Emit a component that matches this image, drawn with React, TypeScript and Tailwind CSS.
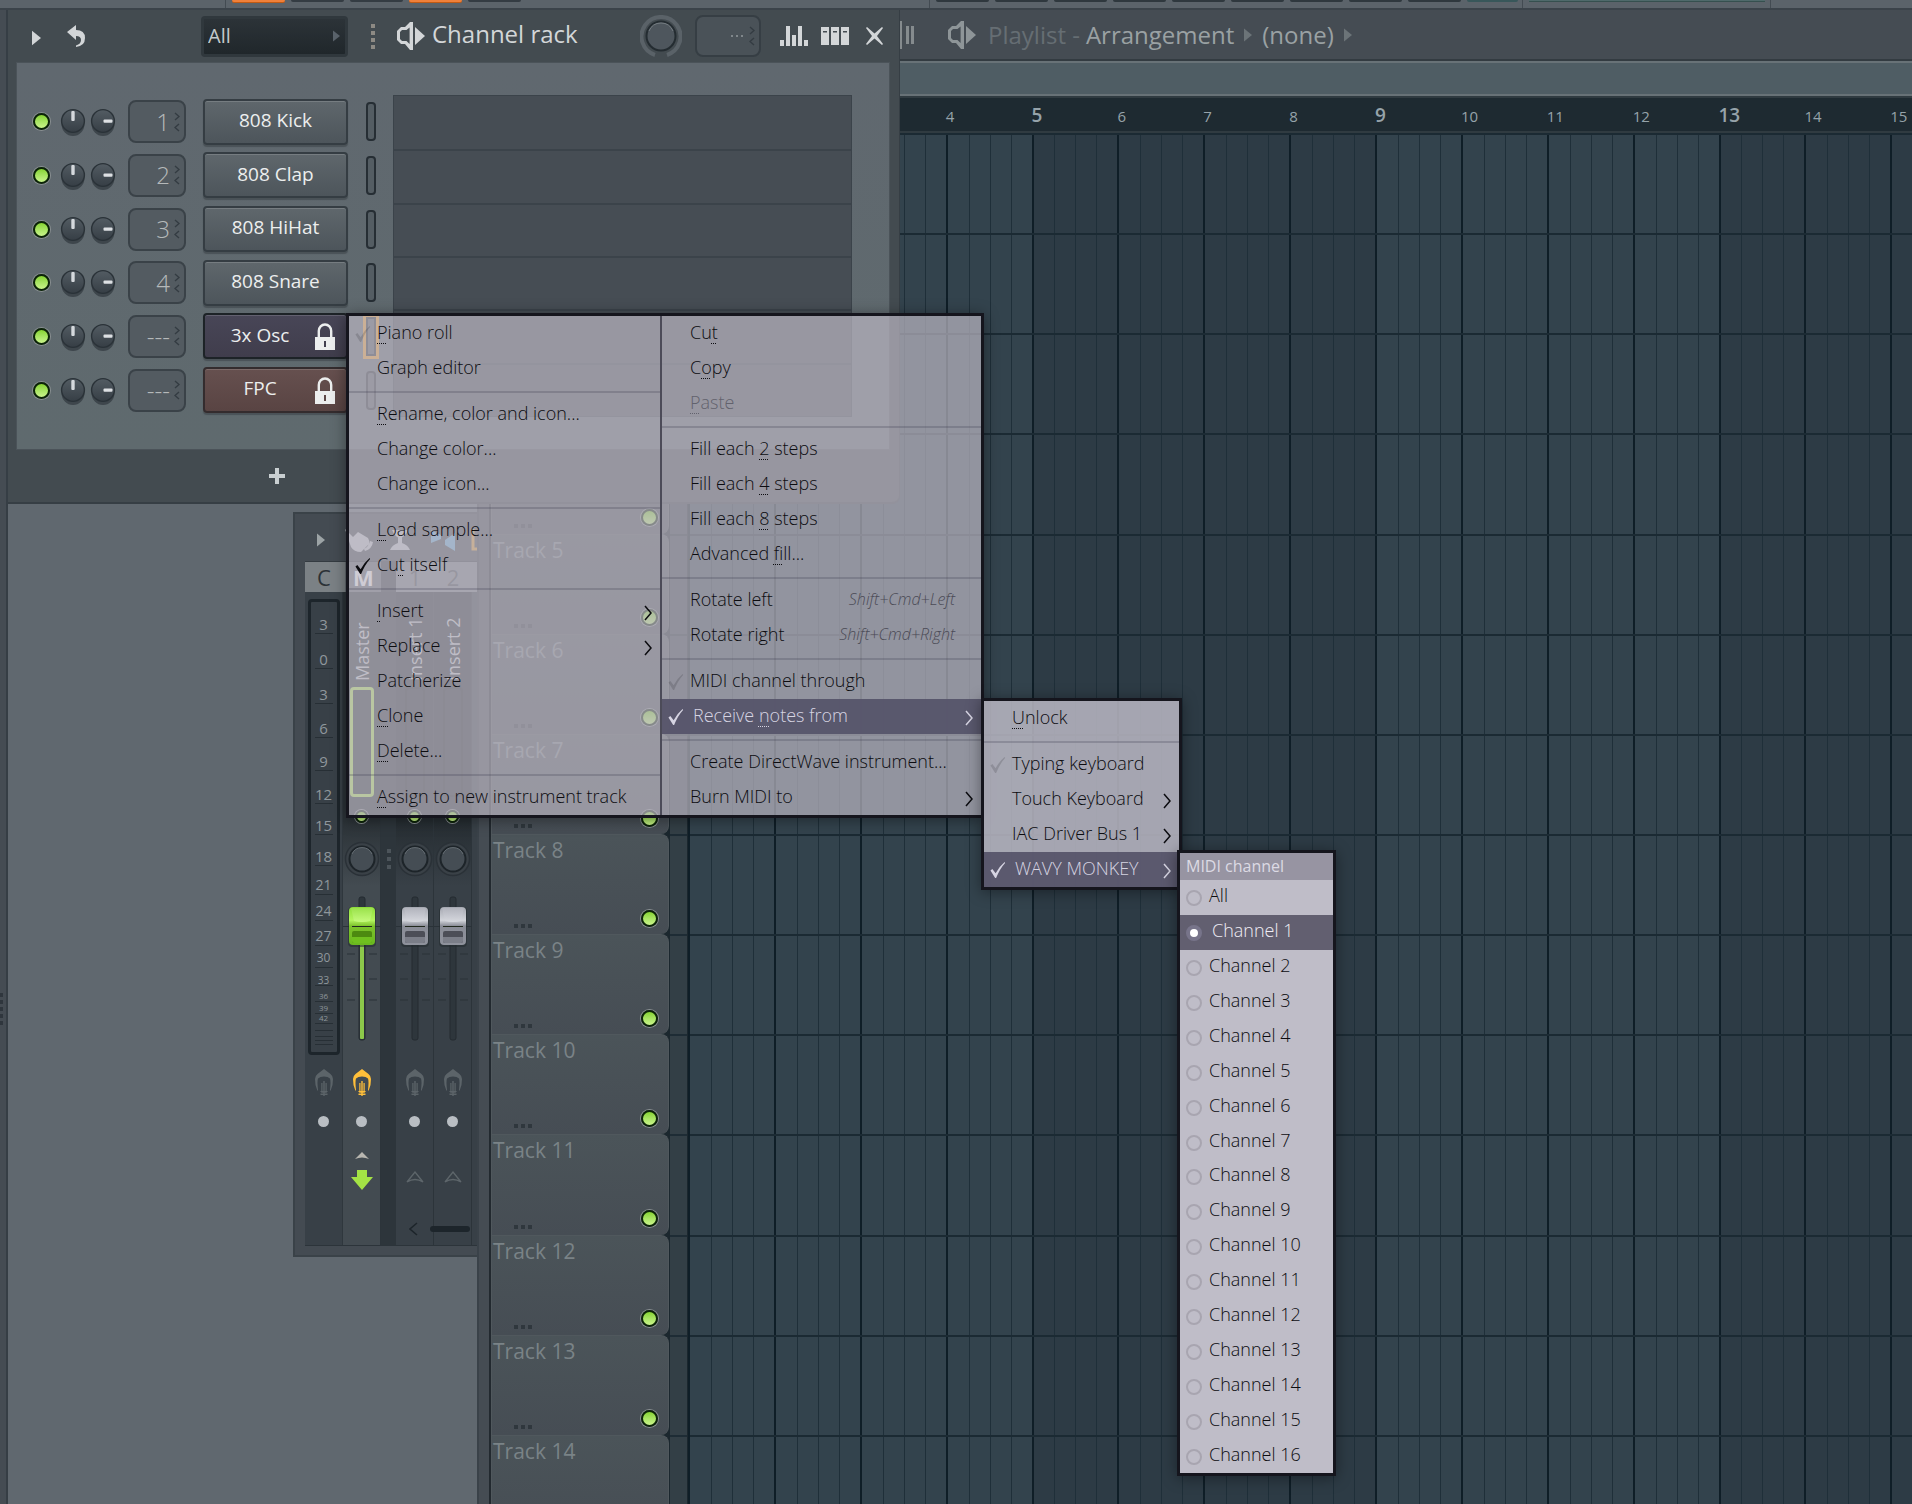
import React from "react";

const range = (n: number) => Array.from({ length: n }, (_, i) => i);

/* ---------- shared drawings ---------- */

function Led({ small = false }: { small?: boolean }) {
  return (
    <span
      className={
        "block shrink-0 rounded-full border-2 border-[#0c2408] bg-gradient-to-b from-[#86d32f] to-[#c9f58a] ring-1 ring-[#8a9092] " +
        (small ? "size-[13px]" : "size-[17px]")
      }
    />
  );
}

function Knob({ side = false }: { side?: boolean }) {
  return (
    <svg viewBox="0 0 26 30" className="block h-[30px] w-[26px]">
      <defs>
        <linearGradient id="knobFace" x1="0" y1="0" x2="0" y2="1">
          <stop offset="0" stopColor="#535c63" />
          <stop offset="1" stopColor="#363e45" />
        </linearGradient>
      </defs>
      <ellipse cx="13" cy="17" rx="11.5" ry="12" fill="#3e464c" />
      <circle cx="13" cy="14" r="11.4" fill="url(#knobFace)" stroke="#2a3238" strokeWidth="1.4" />
      {side ? (
        <rect x="13.5" y="12.4" width="9" height="3.4" rx="1" fill="#dde0e3" />
      ) : (
        <rect x="11.3" y="4" width="3.4" height="10" rx="1" fill="#d5d9dd" />
      )}
    </svg>
  );
}

function Spin() {
  return (
    <svg viewBox="0 0 6 20" className="h-5 w-[6px] fill-none stroke-[#343c42]" strokeWidth="1.4">
      <path d="M1 1l4 3.5L1 8M5 12l-4 3.5L5 19" />
    </svg>
  );
}

function Tri({ className }: { className: string }) {
  return (
    <svg viewBox="0 0 10 16" className={"fill-current " + className}>
      <path d="M0 0L10 8L0 16Z" />
    </svg>
  );
}

function Speaker() {
  return (
    <svg viewBox="0 0 28 28" className="h-7 w-7 shrink-0 fill-current">
      <path d="M13 0h3v28h-3l-5-6H4l-4-4V9l4-4h4zM12.600 5.500L9.500 8H5L3 10v7l2 2h4.500l3.100 3z" fillRule="evenodd" />
      <path d="M18 5l10 9l-10 9z" />
    </svg>
  );
}

function Lock() {
  return (
    <svg viewBox="0 0 20 27" className="h-[27px] w-5 shrink-0">
      <path d="M3.800 14V8a6.200 6.500 0 0 1 12.400 0v6" fill="none" stroke="currentColor" strokeWidth="2.400" />
      <path fill="currentColor" fillRule="evenodd" d="M0 14h20v13H0zM9 18v6h2v-6z" />
    </svg>
  );
}

function Check({ className }: { className: string }) {
  return (
    <svg viewBox="0 0 16 18" className={"h-[17px] w-4 fill-current " + className}>
      <path d="M0 9l2-1.500l3.500 4.500Q9 5 15 0l.5 1Q10 7 6 17h-1z" />
    </svg>
  );
}

function Chevron() {
  return (
    <svg viewBox="0 0 8 16" className="h-4 w-2 fill-none stroke-current" strokeWidth="1.5">
      <path d="M1 1l6 7l-6 7" />
    </svg>
  );
}

function Dots() {
  return (
    <span className="flex gap-[3px] text-[#2f373d]">
      {range(3).map((i) => (
        <i key={i} className="size-1 bg-current" />
      ))}
    </span>
  );
}

/* ---------- top toolbar ---------- */

const toolA = [true, false, false, true, false];

function Toolbar() {
  return (
    <header className="flex h-[10px] shrink-0 items-start overflow-hidden border-b-2 border-[#3b434a] bg-[#5b636a]">
      <div className="h-full w-[226px] shrink-0 border-r border-[#434b52]" />
      <div className="flex w-[703px] shrink-0 gap-[6px] pl-[6px]">
        {toolA.map((on, i) => (
          <span
            key={i}
            className={
              "h-[2px] w-[53px] rounded-b-sm " + (on ? "bg-[#f0803a] shadow-[0_1px_0_#c05a14]" : "bg-[#343c43]")
            }
          />
        ))}
      </div>
      <div className="flex h-full w-[594px] shrink-0 gap-[6px] border-x border-[#434b52] pl-[6px]">
        {range(9).map((i) => (
          <span key={i} className="h-[2px] w-[53px] shrink-0 rounded-b-sm bg-[#2f383e]" />
        ))}
        <span className="h-[2px] w-[51px] shrink-0 rounded-b-sm bg-[#38575a]" />
      </div>
      <div className="h-full w-[248px] shrink-0 border-r border-[#434b52] pl-[6px]">
        <div className="h-[2px] w-[236px] border-b border-[#36504f] bg-[#4f6a6b]" />
      </div>
    </header>
  );
}

/* ---------- playlist ---------- */

function Playlist() {
  return (
    <section className="absolute inset-y-0 right-0 left-[477px] flex flex-col overflow-hidden border-l-2 border-[#3a4249] bg-[#454c53] font-['Open_Sans',sans-serif]">
      <div className="flex h-[51px] shrink-0 items-center gap-3 border-b-2 border-[#333b41] pl-[420px] text-2xl text-[#9aa1a3]">
        <svg viewBox="0 0 16 28" className="h-7 w-4 shrink-0 fill-[#858b8e]">
          <path d="M0 0h3v28H0zM7 5h3v18H7zM12 5h3v18h-3z" />
        </svg>
        <span className="ml-[21px] text-[#8e9598]">
          <Speaker />
        </span>
        <h2 className="flex items-center gap-[10px] whitespace-nowrap">
          <span className="text-[#666e73]">Playlist -</span>
          <span className="-ml-1">Arrangement</span>
          <Tri className="h-[14px] w-2 text-[#6c7478]" />
          <span>(none)</span>
          <Tri className="h-[14px] w-2 text-[#6c7478]" />
        </h2>
      </div>
      <div className="h-[35px] shrink-0 border-y-2 border-[#687277] bg-[#4f5d64]" />
      <div className="flex h-[37px] shrink-0 border-y-2 border-[#303b41] bg-[#1e2a31] pl-[209px]">
        <div className="grid w-[1374px] shrink-0 grid-cols-[repeat(16,1fr)] text-[#96a3aa]">
          {range(16).map((b) => (
            <span
              key={b}
              className={
                "leading-[34px] " + (b % 4 === 0 ? "text-[19px] font-semibold" : "pt-px text-[15px]")
              }
            >
              {b + 1}
            </span>
          ))}
        </div>
      </div>
      <div className="grid min-h-0 flex-1 overflow-hidden border-l-[10px] border-[#454c53] bg-[#1b272e]">
        <div className="col-start-1 row-start-1 flex h-[1402px] overflow-hidden pl-[199px]">
          <div className="grid w-[1374px] shrink-0 grid-cols-[repeat(16,1fr)]">
            {range(16).map((b) => (
              <div
                key={b}
                className={
                  "grid grid-cols-4 border-l-2 border-[#0f1e27] " +
                  (Math.floor(b / 4) % 2 ? "bg-[#2d3b45]" : "bg-[#33434d]")
                }
              >
                <i />
                <i className="border-l border-[#1f2f39]" />
                <i className="border-l border-[#1f2f39]" />
                <i className="border-l border-[#1f2f39]" />
              </div>
            ))}
          </div>
        </div>
        <div className="col-start-1 row-start-1 grid h-[1402px] grid-rows-[repeat(14,1fr)] border-l-2 border-[#22292f]">
          {range(14).map((t) => (
            <div key={t} className="flex">
              <div className="flex w-[178px] shrink-0 flex-col justify-between rounded-r-lg border-t border-r border-l-[1px] border-[#50585d] bg-gradient-to-b from-[#4b5459] to-[#464d54] pt-px pr-[10px] pb-[6px] pl-px">
                <span className="text-[21px] leading-7 font-medium text-[#7a8387]">Track {t + 1}</span>
                <span className="flex items-center justify-between pl-[21px]">
                  <span className="pt-4">
                    <Dots />
                  </span>
                  <Led />
                </span>
              </div>
              <div className="ml-px w-[17px] shrink-0 border-t-2 border-[#1e2c35] bg-[#333f46]" />
              <div className="ml-[3px] flex-1 border-t-2 border-[#1b2a33]" />
            </div>
          ))}
        </div>
      </div>
    </section>
  );
}

/* ---------- mixer ---------- */

const scale: [string, string, string][] = [
  ["3", "h-[32px]", "text-[15px]"],
  ["0", "h-[35px]", "text-[15px]"],
  ["3", "h-[35px]", "text-[15px]"],
  ["6", "h-[34px]", "text-[15px]"],
  ["9", "h-[33px]", "text-[15px]"],
  ["12", "h-[33px]", "text-[15px]"],
  ["15", "h-[31px]", "text-[15px]"],
  ["18", "h-[31px]", "text-[15px]"],
  ["21", "h-[29px]", "text-[14px]"],
  ["24", "h-[26px]", "text-[14px]"],
  ["27", "h-[25px]", "text-[14px]"],
  ["30", "h-[22px]", "text-[12px]"],
  ["33", "h-[18px]", "text-[10px]"],
  ["36", "h-[16px]", "text-[8px]"],
  ["39", "h-[12px]", "text-[8px]"],
  ["42", "h-[10px]", "text-[8px]"],
  ["", "h-[7px]", "text-[8px]"],
  ["", "h-[6px]", "text-[8px]"],
  ["", "h-[4px]", "text-[8px]"],
  ["", "h-[4px]", "text-[8px]"],
];

function SendIcon({ className }: { className: string }) {
  return (
    <svg viewBox="0 0 18 27" className={"h-[27px] w-[18px] fill-current " + className}>
      <path d="M9 0L15.500 5Q18 7 18 10L17.500 16L15.500 22L15 21Q16 12 15 9.500Q13 7.500 9 7.500Q5 7.500 3 9.500Q2 12 3 21L2.500 22L.5 16L0 10Q0 7 2.500 5Z" />
      <path d="M6.300 14h1.200v8h-1.200zM8.300 12h1.400v15h-1.400zM10.500 14h1.200v8h-1.200zM5 22h8l-1.500 1.800h-5zM5.500 24.500h7v1.500h-7z" />
    </svg>
  );
}

function MixKnob() {
  return (
    <svg viewBox="0 0 36 36" className="size-9 shrink-0">
      <circle cx="18" cy="18" r="16.500" fill="#3a4147" stroke="#2a3137" strokeWidth="1.500" />
      <circle cx="18" cy="18" r="12.500" fill="#454d54" stroke="#1d2429" strokeWidth="2" />
      <path d="M8 13a11 11 0 0 1 20 0" fill="none" stroke="#636b71" strokeWidth="1" />
    </svg>
  );
}

function Fader({ green = false }: { green?: boolean }) {
  const id = green ? "fg" : "fs";
  return (
    <svg viewBox="0 0 38 152" className="h-[152px] w-[38px] shrink-0">
      <defs>
        <linearGradient id={id} x1="0" y1="0" x2="0" y2="1">
          <stop offset="0" stopColor={green ? "#8ddc3a" : "#a4a7b0"} />
          <stop offset="0.35" stopColor={green ? "#b4f45f" : "#d2d4da"} />
          <stop offset="0.5" stopColor={green ? "#7cc22c" : "#898c96"} />
          <stop offset="1" stopColor={green ? "#69b81f" : "#8f929c"} />
        </linearGradient>
        <linearGradient id={id + "top"} x1="0" y1="0" x2="0" y2="1">
          <stop offset="0" stopColor={green ? "#9be24c" : "#b2b4bd"} />
          <stop offset="1" stopColor={green ? "#c6fb7e" : "#d6d8de"} />
        </linearGradient>
      </defs>
      <path
        d="M0 33.500h38M4 61h8M26 61h8M4 86h8M26 86h8M4 107h8M26 107h8"
        stroke="#2a3238"
        strokeWidth="1"
      />
      <rect x="16" y="4" width="6" height="143" rx="2" fill="#2e363c" stroke="#242b31" />
      {green && <rect x="17" y="50" width="4" height="96" rx="1" fill="#8cc84a" />}
      <rect x="5" y="14" width="28" height="40" rx="4" fill="#20272b" opacity=".5" />
      <rect x="6" y="14" width="26" height="38" rx="4" fill={"url(#" + id + ")"} />
      <path d="M8 15h22l-3 13q-8 2-16 0z" fill={"url(#" + id + "top)"} />
      <rect x="9" y="38" width="20" height="12" rx="2" fill={green ? "#4c8a10" : "#4c4e57"} />
      <path d="M9 44h20v4q0 2-2 2H11q-2 0-2-2z" fill={green ? "#6fc01f" : "#7b7e88"} />
      <path d="M9 33.500h20" stroke="#222a1f" strokeWidth="1" />
    </svg>
  );
}

function Strip({ name, master = false }: { name: string; master?: boolean }) {
  return (
    <div
      className={
        "flex w-[38px] shrink-0 flex-col items-center border-r border-[#2c343a] bg-gradient-to-b from-35% to-45% " +
        (master ? "from-[#2b3237] to-[#434b51]" : "from-[#262d32] to-[#384047]")
      }
    >
      <span className="flex h-[95px] shrink-0 rotate-180 items-center justify-start pt-[6px] text-[18px] leading-5 whitespace-nowrap text-[#c8ccd0] [writing-mode:vertical-rl]">
        {name}
      </span>
      <span
        className={
          "h-[110px] shrink-0 rounded-sm " +
          (master ? "w-[24px] border-3 border-[#b4ea58]" : "w-[20px] border-2 border-[#1f262b]")
        }
      />
      <span className="flex h-[38px] shrink-0 items-center">
        <Led small />
      </span>
      <span className="flex h-[58px] shrink-0 items-start pt-[6px]">
        <MixKnob />
      </span>
      <Fader green={master} />
      <SendIcon className={"mt-6 shrink-0 " + (master ? "text-[#ffbf3a]" : "text-[#5c6469]")} />
      <span className="mt-[20px] size-[11px] shrink-0 rounded-full bg-[#b9bec3]" />
      {master ? (
        <svg viewBox="0 0 22 40" className="mt-[23px] h-10 w-[22px] shrink-0">
          <path d="M4 9L11 2l7 7q-7-3-14 0z" fill="#b8b6b0" />
          <path d="M6 20h10v7h6L11 40L0 27h6z" fill="#a4e345" />
        </svg>
      ) : (
        <svg viewBox="0 0 18 12" className="mt-[44px] h-3 w-[18px] shrink-0 fill-none stroke-[#5e666b]" strokeWidth="1.300">
          <path d="M1 11L9 1l8 10q-8-5-16 0z" />
        </svg>
      )}
    </div>
  );
}

function Mixer() {
  return (
    <section className="absolute top-[502px] left-[293px] flex h-[745px] w-[220px] flex-col overflow-hidden border-2 border-[#3a4248] bg-[#444b52] pb-[9px] pl-[10px] font-['Open_Sans',sans-serif]">
      <div className="flex h-[47px] shrink-0 items-center pt-[5px] pl-[12px] text-[#9ca3a5]">
        <Tri className="h-4 w-2" />
        <svg viewBox="0 0 28 24" className="ml-5 h-6 w-7 fill-[#c5c9cf]">
          <path d="M0 1l8 8l5-5l10 6q2 3 1 6l-8 8q-7 0-10-5zM25 13l3 1q-1 7-8 9l-1-2q5-3 6-8z" />
        </svg>
        <svg viewBox="0 0 22 24" className="ml-4 h-6 w-[22px] fill-[#c5c9cf]">
          <path d="M3 2h16q-3 7-8 8Q6 9 3 2zM9 9h4v6q6 2 8 7H1q2-5 8-7z" />
        </svg>
        <svg viewBox="0 0 24 22" className="ml-5 h-[22px] w-6 fill-[#6fb2dc]">
          <path d="M0 1l10 5v4L0 14zM24 4v18l-10-6v-5z" />
        </svg>
        <svg viewBox="0 0 10 22" className="ml-4 h-[22px] w-[10px] fill-none stroke-[#e0a03c]" strokeWidth="3">
          <path d="M2 0v20h8" />
        </svg>
      </div>
      <div className="flex h-[31px] shrink-0 border-t border-[#343b41] text-[22px] leading-[30px]">
        <span className="w-[40px] bg-[#7b8185] pl-3 text-[#2b3136]">C</span>
        <span className="w-[36px] bg-[#62696e] pl-2 font-bold text-white">M</span>
        <span className="w-[15px] bg-[#343b42]" />
        <span className="w-[38px] bg-[#7b8185] text-center text-[#454c52]">1</span>
        <span className="w-[38px] bg-[#7b8185] text-center text-[#454c52]">2</span>
        <span className="flex-1 bg-[#7b8185]" />
      </div>
      <div className="relative flex min-h-0 flex-1 overflow-hidden border-b border-[#2c343a] bg-[#384047]">
        <div className="flex w-[38px] shrink-0 flex-col items-center border-r border-[#2f373d]">
          <div className="mt-[7px] flex h-[456px] w-[32px] shrink-0 flex-col items-center rounded-sm border-[3px] border-[#1d252b] text-[#8f979c]">
            {scale.map(([n, h, size], i) => (
              <span
                key={i}
                className={
                  "flex w-[18px] shrink-0 items-end justify-center border-b border-[#272f35] leading-[18px] " + h + " " + size
                }
              >
                {n && <span className={i > 11 ? "leading-[10px]" : ""}>{n}</span>}
              </span>
            ))}
          </div>
          <SendIcon className="mt-[14px] shrink-0 text-[#5c6469]" />
          <span className="mt-[20px] size-[11px] shrink-0 rounded-full bg-[#b9bec3]" />
        </div>
        <Strip name="Master" master />
        <div className="flex w-[15px] shrink-0 flex-col items-center gap-1 bg-[#2d353b] pt-[257px]">
          {range(3).map((i) => (
            <i key={i} className="size-1 bg-[#4c545a]" />
          ))}
        </div>
        <Strip name="Insert 1" />
        <Strip name="Insert 2" />
        <div className="absolute bottom-[9px] left-[104px] flex items-center gap-3">
          <svg viewBox="0 0 9 14" className="h-[14px] w-[9px] fill-none stroke-[#1d252b]" strokeWidth="1.500">
            <path d="M8 1L1 7l7 6" />
          </svg>
          <span className="h-[6px] w-[40px] rounded-full bg-[#1d252b]" />
        </div>
      </div>
    </section>
  );
}

/* ---------- channel rack ---------- */

const channels = [
  { num: "1", name: "808 Kick", tone: "from-[#5f676c] to-[#4d555b] border-[#353d43]" },
  { num: "2", name: "808 Clap", tone: "from-[#5f676c] to-[#4d555b] border-[#353d43]" },
  { num: "3", name: "808 HiHat", tone: "from-[#5f676c] to-[#4d555b] border-[#353d43]" },
  { num: "4", name: "808 Snare", tone: "from-[#5f676c] to-[#4d555b] border-[#353d43]" },
  { num: "---", name: "3x Osc", lock: true, tone: "from-[#484657] to-[#403d4c] border-[#1d2327]" },
  { num: "---", name: "FPC", lock: true, tone: "from-[#66504f] to-[#594443] border-[#342c2e]" },
];

function ChannelRack() {
  return (
    <section className="absolute top-0 left-[8px] flex h-[494px] w-[892px] flex-col rounded-br-lg border-r border-b-2 border-[#363e44] bg-[#434b50] font-['Open_Sans',sans-serif]">
      <div className="flex h-[52px] shrink-0 items-center pl-6 text-[#d3d6d8]">
        <button aria-label="Menu" className="pt-1">
          <Tri className="h-4 w-[9px]" />
        </button>
        <button aria-label="Undo" className="ml-[26px]">
          <svg viewBox="0 0 20 22" className="h-[22px] w-5 fill-current">
            <path d="M0 7L9 0v5Q18 5 18 13Q18 21 9 22v-1.500Q14 19 14 15Q14 11 9 11v4z" />
          </svg>
        </button>
        <label className="relative ml-[114px] flex items-center">
          <select
            aria-label="Filter"
            className="h-[41px] w-[147px] appearance-none rounded border-[3px] border-[#30383d] bg-gradient-to-b from-[#2c3338] to-[#20272b] pl-1 text-[20px] leading-8 text-[#c3c9cb] outline-none"
          >
            <option>All</option>
          </select>
          <Tri className="absolute right-2 h-3 w-[7px] text-[#59626a]" />
        </label>
        <span className="ml-[23px] flex flex-col gap-[3px]">
          {range(4).map((i) => (
            <i key={i} className="size-1 bg-[#8d8a84]" />
          ))}
        </span>
        <span className="ml-[22px]">
          <Speaker />
        </span>
        <h1 className="ml-[7px] w-[208px] pb-[4px] text-2xl whitespace-nowrap">Channel rack</h1>
        <svg viewBox="0 0 42 42" className="h-[42px] w-[42px] shrink-0">
          <path d="M15 40A19.500 19.500 0 1 1 27 40" fill="none" stroke="#5a6268" strokeWidth="4" />
          <circle cx="21" cy="21" r="14.500" fill="#4e565d" stroke="#242c31" strokeWidth="2" />
          <path d="M9 16a13 13 0 0 1 24 0" fill="none" stroke="#757d82" strokeWidth="1" />
        </svg>
        <span className="ml-[13px] flex h-[42px] w-[66px] items-center justify-end gap-[6px] rounded-lg border-2 border-[#363e44] bg-[#4a5258] pr-1">
          <span className="flex gap-[3px]">
            {range(3).map((i) => (
              <i key={i} className="size-[2px] bg-[#80878b]" />
            ))}
          </span>
          <Spin />
        </span>
        <button aria-label="Graph editor" className="ml-[19px]">
          <svg viewBox="0 0 28 20" className="h-5 w-7 fill-current">
            <path d="M0 14h4v6H0zM6 0h4v20H6zM12 9h4v11h-4zM18 0h4v20h-4zM24 14h4v6h-4z" />
          </svg>
        </button>
        <button aria-label="Step sequencer" className="ml-[13px]">
          <svg viewBox="0 0 28 18" className="h-[18px] w-7 fill-current">
            <path fillRule="evenodd" d="M0 0h8v18H0zM10 0h8v18h-8zM20 0h8v18h-8zM2 4v1.500h4V4zM12 4v1.500h4V4zM22 4v1.500h4V4z" />
          </svg>
        </button>
        <button aria-label="Close" className="ml-[17px]">
          <svg viewBox="0 0 17 18" className="h-[18px] w-[17px] fill-current">
            <path d="M0 1L1 0l7.500 6.500L16 0l1 1l-6 8l6 8l-1 1l-7.500-6.500L1 18l-1-1l6-8z" />
          </svg>
        </button>
      </div>
      <div className="mr-[9px] ml-[8px] flex flex-1 border border-[#4b5359] bg-gradient-to-b from-[#60686f] to-[#5f6a6e] pt-[32px]">
        <div className="grid h-[322px] w-[376px] shrink-0 grid-rows-[repeat(6,1fr)]">
          {channels.map((c, i) => (
            <div key={c.name} className="flex items-center pl-4">
              <Led />
              <span className="ml-[10px] pt-px">
                <Knob />
              </span>
              <span className="ml-[4px] pt-px">
                <Knob side />
              </span>
              <span className="ml-[12px] flex h-[43px] w-[58px] items-center justify-end gap-1 rounded-lg border-2 border-[#3a4248] bg-[#535b61] pr-[4px] text-[24px] leading-none font-light text-[#b5b9ba]">
                {c.num}
                <Spin />
              </span>
              <button
                className={
                  "ml-[17px] flex h-[46px] w-[145px] items-center rounded border-2 bg-gradient-to-b pb-[3px] text-[19px] text-[#eceeee] shadow-[0_2px_1px_#4a5257,inset_0_1px_0_rgba(255,255,255,.15)] " +
                  c.tone
                }
              >
                <span className="flex-1 text-center">{c.name}</span>
                {c.lock && (
                  <span className="pt-1 pr-[11px]">
                    <Lock />
                  </span>
                )}
              </button>
              <span
                className={
                  "ml-[18px] h-[39px] w-[10px] border-2 border-[#262e34] bg-[#545d63] " +
                  (i === 4 ? "ring-3 ring-[#f0a030]" : "rounded-sm")
                }
              />
            </div>
          ))}
        </div>
        <div className="grid h-[322px] flex-1 grid-rows-[repeat(6,1fr)] border border-[#3b434a] bg-[#464d54]">
          {range(6).map((i) => (
            <div key={i} className={i ? "border-t-2 border-[#3b434a]" : ""} />
          ))}
        </div>
        <div className="w-[37px]" />
      </div>
      <div className="flex h-[52px] shrink-0 items-center pl-[261px]">
        <button aria-label="Add channel">
          <svg viewBox="0 0 16 16" className="size-4 fill-[#c9cfd1]">
            <path d="M6 0h4v6h6v4h-6v6H6v-6H0V6h6z" />
          </svg>
        </button>
      </div>
    </section>
  );
}

/* ---------- menus ---------- */

type Item = {
  label?: string;
  check?: "on" | "off";
  sub?: boolean;
  hot?: boolean;
  off?: boolean;
  keys?: string;
};

const SEP: Item = {};

const menuA: Item[] = [
  { label: "&Piano roll", check: "off" },
  { label: "Graph editor" },
  SEP,
  { label: "&Rename, color and icon..." },
  { label: "Change color..." },
  { label: "Change icon..." },
  SEP,
  { label: "&Load sample..." },
  { label: "Cu&t itself", check: "on" },
  SEP,
  { label: "&Insert", sub: true },
  { label: "Replace", sub: true },
  { label: "Patcherize" },
  { label: "&Clone" },
  { label: "&Delete..." },
  SEP,
  { label: "&Assign to new instrument track" },
];

const menuB: Item[] = [
  { label: "Cu&t" },
  { label: "C&opy" },
  { label: "&Paste", off: true },
  SEP,
  { label: "Fill each &2 steps" },
  { label: "Fill each &4 steps" },
  { label: "Fill each &8 steps" },
  { label: "Advanced &fill..." },
  SEP,
  { label: "Rotate left", keys: "Shift+Cmd+Left" },
  { label: "Rotate right", keys: "Shift+Cmd+Right" },
  SEP,
  { label: "MIDI channel through", check: "off" },
  { label: "Receive &notes from", check: "on", sub: true, hot: true },
  SEP,
  { label: "Create DirectWave instrument..." },
  { label: "Burn MIDI to", sub: true },
];

const menuC: Item[] = [
  { label: "&Unlock" },
  SEP,
  { label: "Typing keyboard", check: "off" },
  { label: "Touch Keyboard", sub: true },
  { label: "IAC Driver Bus 1", sub: true },
  { label: "WAVY MONKEY", check: "on", sub: true, hot: true },
];

function Label({ text }: { text: string }) {
  const at = text.indexOf("&");
  if (at < 0) return <span className="pb-[3px]">{text}</span>;
  return (
    <span className="pb-[3px]">
      {text.slice(0, at)}
      <span className="underline decoration-dotted decoration-1 underline-offset-4">{text[at + 1]}</span>
      {text.slice(at + 2)}
    </span>
  );
}

function MenuList({ items, className = "" }: { items: Item[]; className?: string }) {
  return (
    <div role="menu" className={"flex flex-col " + className}>
      {items.map((it, i) =>
        it.label === undefined ? (
          <div key={i} className="flex h-[11px] flex-col justify-center">
            <hr className="border-t-2 border-[#3c3a50]/25" />
          </div>
        ) : (
          <button
            key={i}
            role="menuitem"
            className={
              "flex h-[35px] items-center text-left whitespace-nowrap " +
              (it.hot ? "bg-[#56546a]/95 text-[#d6d4e2]" : it.off ? "text-[#62626d]" : "text-[#0c0c10]")
            }
          >
            <span className={"flex shrink-0 justify-center pt-[2px] " + (it.hot ? "w-[31px] pr-[3px]" : "w-[28px]")}>
              {it.check && <Check className={it.check === "on" ? "" : "opacity-15"} />}
            </span>
            <Label text={it.label} />
            {it.keys && (
              <span className="mr-[26px] ml-auto pb-[3px] text-[16px] text-[#4b4b56] italic">{it.keys}</span>
            )}
            {it.sub && (
              <span className="mr-[8px] ml-auto pt-[3px]">
                <Chevron />
              </span>
            )}
          </button>
        ),
      )}
    </div>
  );
}

const shell =
  "absolute border-3 border-[#15151d] shadow-[0_2px_14px_rgba(0,0,0,.4)] font-['Open_Sans',sans-serif] text-[18px] font-light ";

function Menus() {
  return (
    <>
      <div className={shell + "top-[313px] left-[346px] flex w-[638px] bg-[#bab7c2]/70 bg-clip-padding"}>
        <MenuList items={menuA} className="w-[311px] shrink-0" />
        <MenuList items={menuB} className="flex-1 border-l-2 border-[#4c4b58]" />
      </div>
      <div className={shell + "top-[698px] left-[981px] w-[201px] bg-[#bbb9c4]/85 bg-clip-padding"}>
        <MenuList items={menuC} />
      </div>
      <fieldset className={shell + "top-[850px] left-[1177px] flex w-[159px] flex-col bg-[#bfbdc8]"}>
        <div className="h-[27px] bg-[#9794a2] pl-[6px] text-[16px] leading-[26px] font-normal text-[#dcdae4]">
          MIDI channel
        </div>
        <div className="grid h-[593px] grid-rows-[repeat(17,1fr)]">
          {range(17).map((i) => (
            <label
              key={i}
              className={
                "flex items-center pl-[6px] " +
                (i === 1 ? "gap-[10px] bg-[#625f70] text-[#efedf5]" : "gap-[7px] text-[#0c0c10]")
              }
            >
              <input
                type="radio"
                name="midi-channel"
                defaultChecked={i === 1}
                className="mt-[2px] size-4 shrink-0 appearance-none rounded-full border-2 border-[#a8a5b0] checked:border-4 checked:border-[#77748a] checked:bg-white"
              />
              <span className="pb-[3px]">{i === 0 ? "All" : `Channel ${i}`}</span>
            </label>
          ))}
        </div>
      </fieldset>
    </>
  );
}

/* ---------- page ---------- */

export default function App() {
  return (
    <div className="relative flex h-screen flex-col overflow-hidden bg-[#60686f]">
      <Toolbar />
      <main className="relative flex min-h-0 flex-1">
        <aside className="flex w-2 shrink-0 flex-col justify-center gap-[3px] border-r-2 border-[#363e45] bg-[#454c53] pt-[504px]">
          {range(5).map((i) => (
            <i key={i} className="h-1 w-[3px] bg-[#2f363d]" />
          ))}
        </aside>
        <Mixer />
        <Playlist />
        <ChannelRack />
      </main>
      <Menus />
    </div>
  );
}
